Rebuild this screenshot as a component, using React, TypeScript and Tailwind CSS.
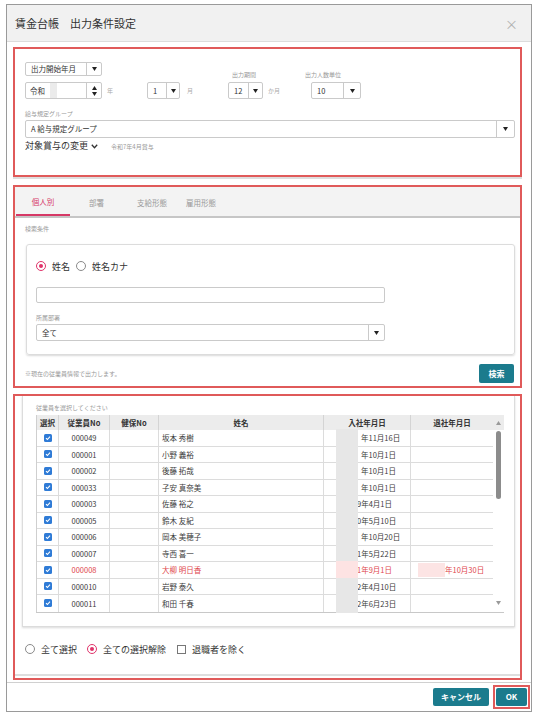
import React from 'react';

type Employee = {
  no: string;
  name: string;
  joined: string;
  lead: boolean;
  retired?: string;
  warn?: boolean;
};

const employees: Employee[] = [
  { no: '000049', name: '坂本 秀樹', joined: '年11月16日', lead: false },
  { no: '000001', name: '小野 義裕', joined: '年10月1日', lead: false },
  { no: '000002', name: '後藤 拓哉', joined: '年10月1日', lead: false },
  { no: '000033', name: '子安 真奈美', joined: '年10月1日', lead: false },
  { no: '000003', name: '佐藤 裕之', joined: '9年4月1日', lead: true },
  { no: '000005', name: '鈴木 友紀', joined: '0年5月10日', lead: true },
  { no: '000006', name: '岡本 美穂子', joined: '年10月20日', lead: false },
  { no: '000007', name: '寺西 喜一', joined: '1年5月22日', lead: true },
  { no: '000008', name: '大柳 明日香', joined: '1年9月1日', lead: true, retired: '年10月30日', warn: true },
  { no: '000010', name: '岩野 泰久', joined: '2年4月10日', lead: true },
  { no: '000011', name: '和田 千春', joined: '2年6月23日', lead: true },
];

const tabs = [
  { label: '個人別', w: 'w-[54px]', active: true },
  { label: '部署', w: 'w-[53px]', active: false },
  { label: '支給形態', w: 'w-[58px]', active: false },
  { label: '雇用形態', w: 'w-[40px]', active: false },
];

const DownTri = ({ color = '#222' }: { color?: string }) => (
  <svg width="5" height="4" viewBox="0 0 5 4">
    <path d="M0 0h5L2.5 4z" fill={color} />
  </svg>
);

const UpTri = ({ color = '#222' }: { color?: string }) => (
  <svg width="5" height="4" viewBox="0 0 5 4">
    <path d="M0 4h5L2.5 0z" fill={color} />
  </svg>
);

const CheckBox = () => (
  <svg width="8" height="8" viewBox="0 0 8 8">
    <rect width="8" height="8" rx="1.5" fill="#2f7bd6" />
    <path d="M2 4.2 3.4 5.5 6 2.7" stroke="#fff" strokeWidth="1.1" fill="none" />
  </svg>
);

function Select({ value, box, btn }: { value: string; box: string; btn: string }) {
  return (
    <div className={`flex bg-white border border-[#cacaca] rounded-[2px] ${box}`}>
      <div className="flex-1 flex items-center pl-[5px] text-[7.5px] leading-none text-[#333]">{value}</div>
      <div className={`flex items-center justify-center border-l border-[#cacaca] ${btn}`}>
        <DownTri />
      </div>
    </div>
  );
}

function Radio({ on, label }: { on: boolean; label: string }) {
  return (
    <span className="flex items-center gap-[6px]">
      <span
        className={`w-[10px] h-[10px] rounded-full flex items-center justify-center ${
          on ? 'border-[1.5px] border-[#e0336a]' : 'border border-[#8a8a8a]'
        }`}
      >
        {on && <span className="w-[4px] h-[4px] rounded-full bg-[#e0336a]" />}
      </span>
      <span className="text-[9px] leading-none text-[#333]">{label}</span>
    </span>
  );
}

const Label = ({ children, className = '' }: { children: React.ReactNode; className?: string }) => (
  <div className={`text-[6px] leading-[8px] text-[#999] ${className}`}>{children}</div>
);

const cols = 'grid grid-cols-[22px_51px_49px_165px_87px_82px]';

export default function App() {
  return (
    <div className="w-[538px] h-[715px] bg-white pt-[4px] pl-[6px] antialiased font-['Noto_Sans_CJK_JP','Noto_Sans',sans-serif]">
      <div className="w-[526px] h-[708px] border border-[#9a9a9a] flex flex-col bg-white">
        {/* title bar */}
        <div className="h-[37px] shrink-0 bg-[#f1f1f1] border-b border-[#dcdcdc] flex items-center justify-between pl-[8px] pr-[13px]">
          <span className="text-[11px] text-[#333]">賃金台帳　出力条件設定</span>
          <span className="text-[13px] text-[#b0b0b0] leading-none">×</span>
        </div>

        <div className="flex-1 pl-[6px] pr-[9px] pt-[5px]">
          {/* output conditions */}
          <section className="h-[130px] border-2 border-[#e05a5a] pl-[10px] pt-[13px] shadow-[0_2px_0_#dedede]">
            <div className="flex items-end">
              <div className="w-[122px] flex flex-col">
                <Select value="出力開始年月" box="w-[77px] h-[14px]" btn="w-[15px]" />
                <div className="mt-[6px] flex items-center">
                  <div className="w-[77px] h-[17px] flex border border-[#cacaca] rounded-[2px]">
                    <div className="flex-1 flex items-center pl-[4px] text-[7.5px] text-[#333]">
                      <span>令和</span>
                      <span className="ml-[5px] shrink-0 w-[7px] h-[15px] bg-[#ebebeb]" />
                    </div>
                    <div className="w-[15px] border-l border-[#cacaca] flex flex-col items-center justify-center gap-[2px]">
                      <UpTri />
                      <DownTri />
                    </div>
                  </div>
                  <span className="ml-[5px] text-[6px] text-[#aaa]">年</span>
                </div>
              </div>

              <div className="w-[81px] flex items-center">
                <Select value="1" box="w-[33px] h-[17px]" btn="w-[13px]" />
                <span className="ml-[7px] text-[6px] text-[#aaa]">月</span>
              </div>

              <div className="w-[77px] flex flex-col">
                <Label className="pl-[4px] mb-[3px]">出力期間</Label>
                <div className="flex items-center">
                  <Select value="12" box="w-[35px] h-[17px]" btn="w-[14px]" />
                  <span className="ml-[5px] text-[6px] text-[#aaa]">か月</span>
                </div>
              </div>

              <div className="flex flex-col">
                <Label className="mb-[3px]">出力人数単位</Label>
                <Select value="10" box="ml-[6px] w-[50px] h-[17px]" btn="w-[17px]" />
              </div>
            </div>

            <Label className="mt-[11px]">給与規定グループ</Label>
            <Select value="A 給与規定グループ" box="mt-[2px] w-[490px] h-[18px]" btn="w-[18px]" />

            <div className="mt-[2px] flex items-center h-[12px]">
              <span className="text-[9px] text-[#333]">対象賞与の変更</span>
              <svg className="ml-[3px]" width="7" height="5" viewBox="0 0 7 5">
                <path d="M0.8 0.8 3.5 3.8 6.2 0.8" stroke="#333" strokeWidth="1.3" fill="none" />
              </svg>
              <span className="ml-[13px] text-[6px] text-[#999]">令和7年4月賞与</span>
            </div>
          </section>

          {/* search conditions */}
          <section className="mt-[8px] h-[203px] border-2 border-[#e05a5a] flex flex-col">
            <div className="h-[31px] shrink-0 bg-[#f3f3f3] border-b-2 border-[#c6c6c6] flex pl-[1px]">
              {tabs.map((t) => (
                <div
                  key={t.label}
                  className={`${t.w} h-full flex items-center justify-center pt-[3px] text-[7.5px] ${
                    t.active ? 'border-b-2 border-[#d63866] text-[#d63866]' : 'text-[#9a9a9a]'
                  }`}
                >
                  {t.label}
                </div>
              ))}
            </div>

            <Label className="pl-[10px] mt-[7px]">検索条件</Label>

            <div className="ml-[11px] mt-[11px] w-[489px] h-[111px] shrink-0 border border-[#dcdcdc] rounded-[3px] shadow-[0_1px_2px_rgba(0,0,0,0.15)] pl-[9px] pt-[15px]">
              <div className="h-[12px] flex items-center gap-[6px]">
                <Radio on label="姓名" />
                <Radio on={false} label="姓名カナ" />
              </div>
              <div className="mt-[15px] w-[349px] h-[16px] border border-[#cacaca] rounded-[2px]" />
              <Label className="mt-[11px]">所属部署</Label>
              <Select value="全て" box="mt-[2px] w-[349px] h-[17px]" btn="w-[16px]" />
            </div>

            <div className="mt-[9px] flex items-center justify-between pl-[10px] pr-[6px]">
              <span className="text-[6px] text-[#999]">※現在の従業員情報で出力します。</span>
              <button className="w-[35px] h-[19px] rounded-[2px] bg-[#1b7b8d] text-white text-[8px] font-bold">検索</button>
            </div>
          </section>

          {/* employee list */}
          <section className="mt-[6px] h-[286px] border-2 border-[#e05a5a] flex flex-col">
            <div className="ml-[7px] w-[493px] h-[231px] shrink-0 border-x border-b border-[#dcdcdc] shadow-[0_1px_2px_rgba(0,0,0,0.15)] pl-[13px] pt-[8px]">
              <Label>従業員を選択してください</Label>
              <div className="mt-[3px] w-[468px] flex border-b border-[#c8c8c8]">
                <div className="w-[457px] border-l border-[#cfcfcf]">
                  <div className={`${cols} h-[15px] bg-[#ececec] text-[7.5px] font-bold text-[#333]`}>
                    {['選択', '従業員No', '健保No', '姓名', '入社年月日', '退社年月日'].map((h, i) => (
                      <div
                        key={h}
                        className={`flex items-center justify-center ${i < 5 ? 'border-r border-[#d4d4d4]' : ''}`}
                      >
                        {h}
                      </div>
                    ))}
                  </div>
                  {employees.map((e, i) => {
                    const text = e.warn ? 'text-[#e0474c]' : 'text-[#3a3a3a]';
                    return (
                      <div
                        key={e.no}
                        className={`${cols} h-[16.5px] text-[7.5px] ${text} ${
                          i < employees.length - 1 ? 'border-b border-[#dcdcdc]' : ''
                        }`}
                      >
                        <div className="flex items-center justify-center border-r border-[#dcdcdc]">
                          <CheckBox />
                        </div>
                        <div className="flex items-center justify-center border-r border-[#dcdcdc]">{e.no}</div>
                        <div className="border-r border-[#dcdcdc]" />
                        <div className="flex items-center pl-[3px] border-r border-[#dcdcdc]">{e.name}</div>
                        <div className={`relative flex items-center border-r border-[#dcdcdc] ${e.lead ? 'pl-[33px]' : 'pl-[37px]'}`}>
                          {e.joined}
                          <span
                            className={`absolute left-[12px] top-[-1px] bottom-[-1px] w-[22px] ${
                              e.warn ? 'bg-[#fde3e3]' : 'bg-[#e7e7e7]'
                            }`}
                          />
                        </div>
                        <div className="relative flex items-center pl-[34px]">
                          {e.retired}
                          {e.retired && (
                            <span className="absolute left-[7px] top-[1px] bottom-[1px] w-[27px] bg-[#fce4e4]" />
                          )}
                        </div>
                      </div>
                    );
                  })}
                </div>
                {/* scroll bar */}
                <div className="w-[11px] flex flex-col items-center">
                  <div className="h-[15px] w-full bg-[#ececec] flex items-center justify-center">
                    <UpTri color="#9a9a9a" />
                  </div>
                  <div className="mt-[1px] w-[5px] h-[68px] rounded-full bg-[#8c8c8c]" />
                  <div className="flex-1" />
                  <div className="mb-[7px]">
                    <DownTri color="#9a9a9a" />
                  </div>
                </div>
              </div>
            </div>

            <div className="mt-[16px] ml-[10px] h-[12px] flex items-center">
              <Radio on={false} label="全て選択" />
              <span className="ml-[10px]">
                <Radio on label="全ての選択解除" />
              </span>
              <span className="ml-[11px] w-[9px] h-[9px] border border-[#777] bg-white" />
              <span className="ml-[6px] text-[9px] leading-none text-[#333]">退職者を除く</span>
            </div>
            <div className="mt-[19px] h-[2px] bg-[#dedede]" />
          </section>
        </div>

        {/* footer */}
        <div className="h-[29px] shrink-0 border-t border-[#d0d0d0] flex items-center justify-end gap-[4px] pr-[1px]">
          <button className="w-[56px] h-[18px] rounded-[2px] bg-[#1b7b8d] text-white text-[8px] font-bold">キャンセル</button>
          <div className="border-2 border-[#e05a5a] p-[1px]">
            <button className="block w-[31px] h-[18px] rounded-[2px] bg-[#1b7b8d] text-white text-[8px] font-bold">OK</button>
          </div>
        </div>
      </div>
    </div>
  );
}
